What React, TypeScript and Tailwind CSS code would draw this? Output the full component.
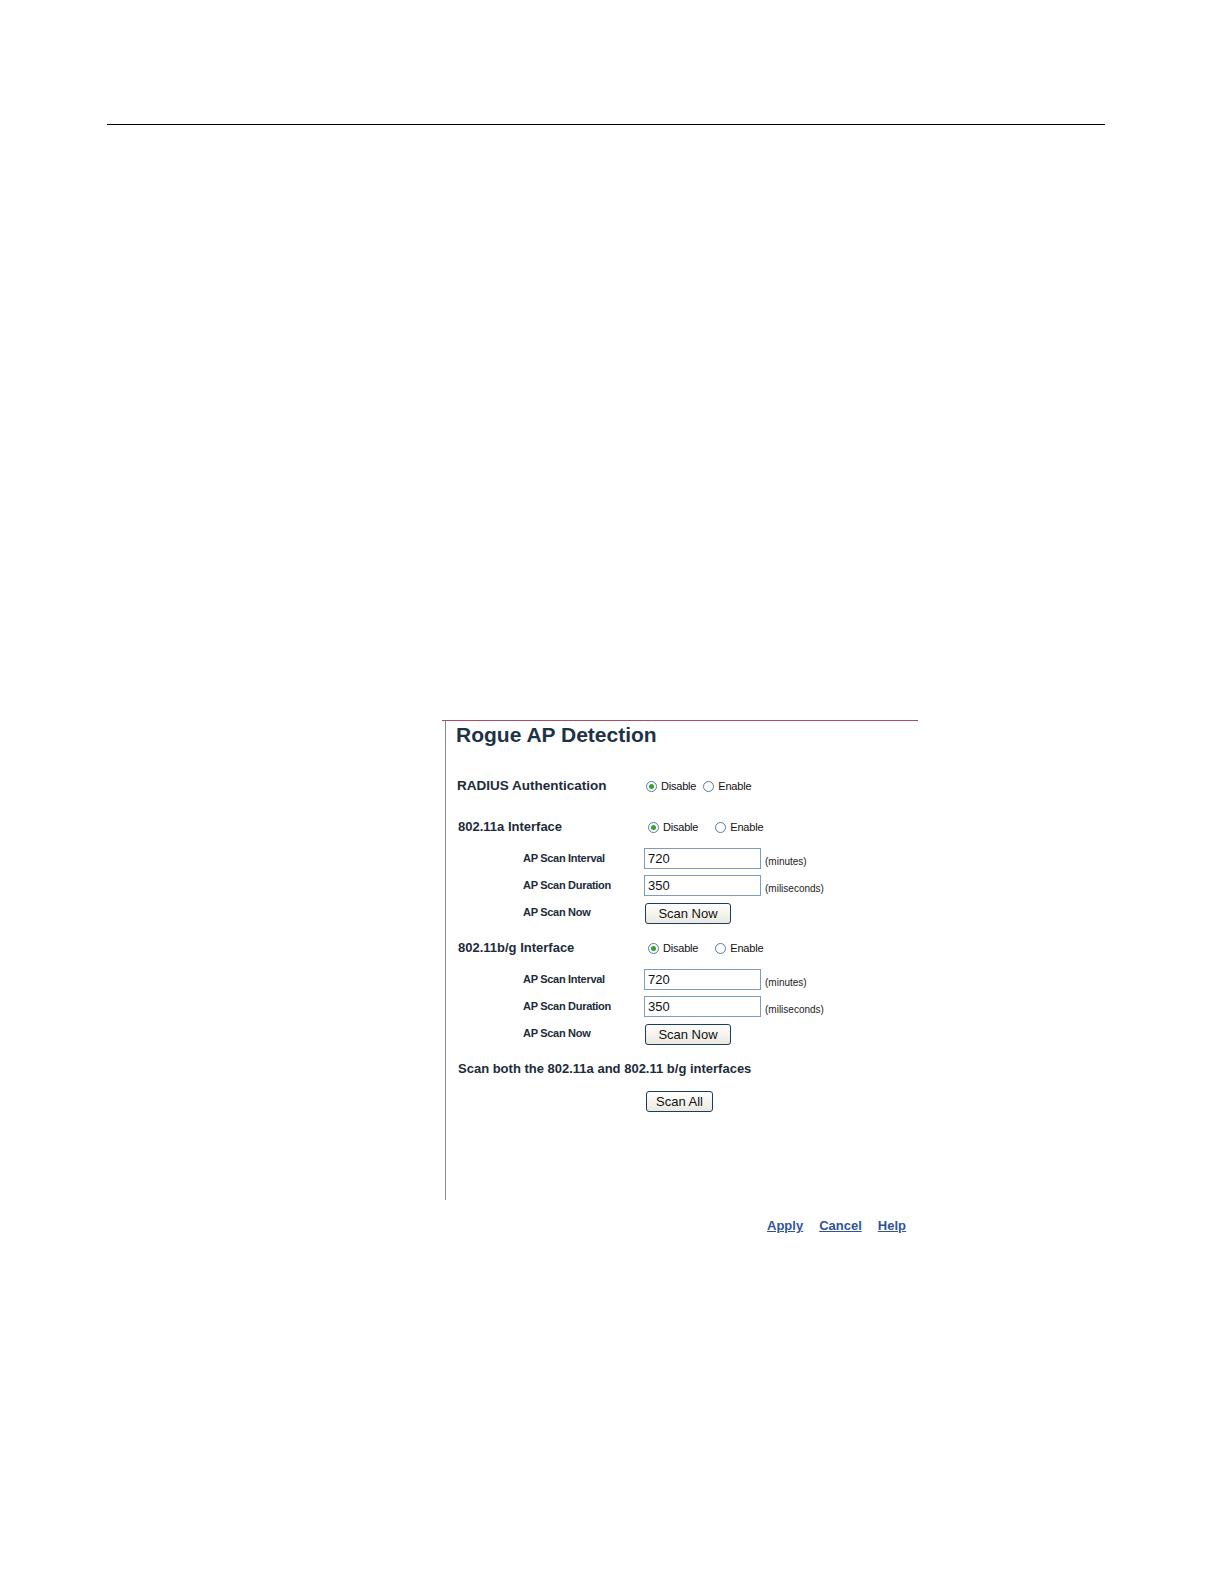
import React from "react";

const font = { fontFamily: '"Liberation Sans", Arial, sans-serif' };

function Radio({ checked, label }: { checked?: boolean; label: string }) {
  return (
    <span className="flex items-center">
      <span className="flex h-[11px] w-[11px] items-center justify-center rounded-full border border-[#5a7a9a] bg-white">
        {checked && <span className="h-[5px] w-[5px] rounded-full bg-[#2fa52f]" />}
      </span>
      <span className="ml-[4px] text-[11px] tracking-[-0.2px] text-[#111]">{label}</span>
    </span>
  );
}

function XpButton({ label, w }: { label: string; w: string }) {
  return (
    <button
      className={`${w} h-[21px] rounded-[3px] border border-[#1c3c64] bg-gradient-to-b from-white to-[#ebe8de] text-[13px] text-[#111]`}
    >
      {label}
    </button>
  );
}

function SubLabel({ children }: { children: React.ReactNode }) {
  return (
    <div className="w-[186px] whitespace-nowrap pl-[65px] text-[11px] font-bold tracking-[-0.3px] text-[#1d2b3a]">
      {children}
    </div>
  );
}

function FieldRow({ label, value, unit }: { label: string; value: string; unit: string }) {
  return (
    <div className="flex h-[27px] items-center">
      <SubLabel>{label}</SubLabel>
      <div className="flex h-[21px] w-[117px] items-center border border-[#7f9db9] bg-white pl-[3px] text-[13px] text-[#111]">
        {value}
      </div>
      <div className="ml-[4px] mt-[6px] whitespace-nowrap text-[10px] text-[#222]">{unit}</div>
    </div>
  );
}

function InterfaceBlock({ title }: { title: string }) {
  return (
    <>
      <div className="flex h-[24px] items-center">
        <div className="w-[190px] text-[13px] font-bold text-[#1d2b3a]">{title}</div>
        <div className="flex items-center gap-[17px]">
          <Radio checked label="Disable" />
          <Radio label="Enable" />
        </div>
      </div>
      <div className="mt-[6px]">
        <FieldRow label="AP Scan Interval" value="720" unit="(minutes)" />
        <FieldRow label="AP Scan Duration" value="350" unit="(miliseconds)" />
        <div className="flex h-[27px] items-center">
          <SubLabel>AP Scan Now</SubLabel>
          <div className="pl-[1px]">
            <XpButton label="Scan Now" w="w-[86px]" />
          </div>
        </div>
      </div>
    </>
  );
}

export default function App() {
  return (
    <div className="bg-white pb-[300px]" style={font}>
      <div className="pt-[124px]">
        <div className="ml-[107px] w-[998px] border-t border-black" />
      </div>

      <div className="ml-[442px] mt-[595px] w-[476px] border-t border-[#b04a62]">
        <div className="ml-[3px] h-[479px] border-l border-[#8a8a8a] pl-[10px]">
          <h1 className="h-[28px] text-[21px] font-bold leading-[28px] text-[#1e3346]">
            Rogue AP Detection
          </h1>

          <div className="mt-[25px] flex h-[24px] items-center pl-[1px]">
            <div className="w-[189px] text-[13.5px] font-bold text-[#1d2b3a]">
              RADIUS Authentication
            </div>
            <div className="flex items-center gap-[7px]">
              <Radio checked label="Disable" />
              <Radio label="Enable" />
            </div>
          </div>

          <div className="mt-[17px] pl-[2px]">
            <InterfaceBlock title="802.11a Interface" />
          </div>

          <div className="mt-[10px] pl-[2px]">
            <InterfaceBlock title="802.11b/g Interface" />
          </div>

          <div className="mt-[10px] flex h-[24px] items-center pl-[2px] text-[13px] font-bold text-[#1d2b3a]">
            Scan both the 802.11a and 802.11 b/g interfaces
          </div>

          <div className="mt-[8px] flex h-[24px] items-center pl-[190px]">
            <XpButton label="Scan All" w="w-[67px]" />
          </div>
        </div>
      </div>

      <div className="ml-[767px] mt-[16px] flex h-[20px] items-center gap-[16px] text-[13px] font-bold text-[#2f5597]">
        <a className="underline">Apply</a>
        <a className="underline">Cancel</a>
        <a className="underline">Help</a>
      </div>
    </div>
  );
}
